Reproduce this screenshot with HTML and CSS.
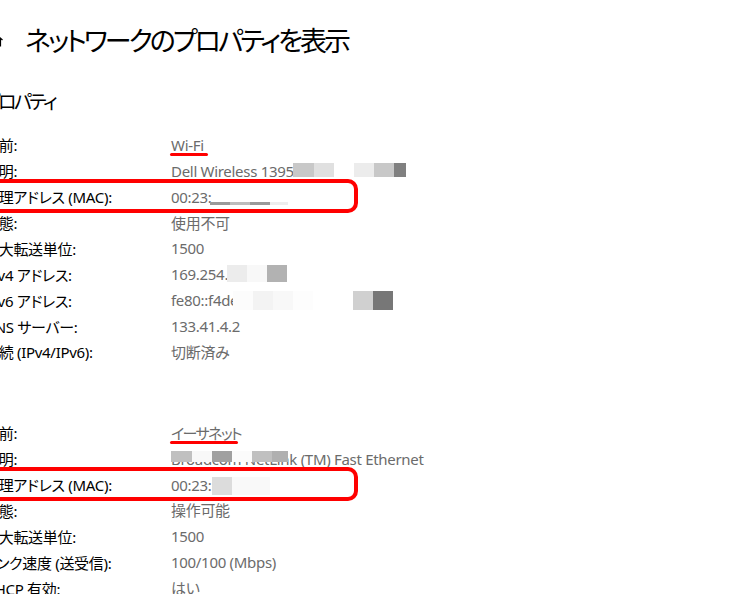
FILE: index.html
```html
<!DOCTYPE html>
<html lang="ja">
<head>
<meta charset="utf-8">
<link rel="stylesheet" href="styles.css">
</head>
<body>
<div class="page">
  <header class="titlebar">
    <svg class="home" viewBox="0 0 16 16" width="16" height="16"><path d="M1.5 8 L8 2 L14.5 8 M3.5 6.5 V14 H12.5 V6.5" fill="none" stroke="#000" stroke-width="1.2"/></svg>
    <h1 class="title">ネットワークのプロパティを表示</h1>
  </header>
  <h2 class="subtitle">プロパティ</h2>

  <section class="group">
    <div class="row"><span class="label">名前:</span><span class="value">Wi-Fi<i class="uline uline-wifi"></i></span></div>
    <div class="row"><span class="label">説明:</span><span class="value">Dell Wireless 1395<i class="blk" style="left:122px;width:21px;top:2px;height:14px;background:#c8c8c8"></i><i class="blk" style="left:143px;width:20px;top:2px;height:14px;background:#e0e0e0"></i><i class="blk" style="left:183px;width:20px;top:2px;height:14px;background:#ececec"></i><i class="blk" style="left:203px;width:20px;top:2px;height:14px;background:#c8c8c8"></i><i class="blk" style="left:223px;width:12px;top:2px;height:14px;background:#808080"></i></span></div>
    <div class="row"><span class="label">物理アドレス (MAC):</span><span class="value">00:23:<i class="blk" style="left:39px;width:20px;top:15px;height:3px;background:#9a9a9a"></i><i class="blk" style="left:59px;width:20px;top:15px;height:3px;background:#bdbdbd"></i><i class="blk" style="left:79px;width:20px;top:15px;height:3px;background:#9a9a9a"></i><i class="blk" style="left:99px;width:18px;top:15px;height:3px;background:#ededed"></i></span><i class="redbox"></i></div>
    <div class="row"><span class="label">状態:</span><span class="value">使用不可</span></div>
    <div class="row"><span class="label">最大転送単位:</span><span class="value">1500</span></div>
    <div class="row"><span class="label">IPv4 アドレス:</span><span class="value">169.254.<i class="blk" style="left:56px;width:20px;top:1px;height:17px;background:#ececec"></i><i class="blk" style="left:76px;width:20px;top:1px;height:17px;background:#f8f8f8"></i><i class="blk" style="left:96px;width:20px;top:1px;height:17px;background:#b2b2b2"></i></span></div>
    <div class="row"><span class="label">IPv6 アドレス:</span><span class="value">fe80::f4de<i class="blk" style="left:62px;width:20px;top:1px;height:19px;background:#fcfcfc"></i><i class="blk" style="left:82px;width:20px;top:1px;height:19px;background:#f3f3f3"></i><i class="blk" style="left:102px;width:20px;top:1px;height:19px;background:#f8f8f8"></i><i class="blk" style="left:122px;width:20px;top:1px;height:19px;background:#fdfdfd"></i><i class="blk" style="left:182px;width:20px;top:1px;height:19px;background:#d0d0d0"></i><i class="blk" style="left:202px;width:20px;top:1px;height:19px;background:#777"></i></span></div>
    <div class="row"><span class="label">DNS サーバー:</span><span class="value">133.41.4.2</span></div>
    <div class="row"><span class="label">接続 (IPv4/IPv6):</span><span class="value">切断済み</span></div>
  </section>

  <section class="group group2">
    <div class="row"><span class="label">名前:</span><span class="value"><span class="tight">イーサネット</span><i class="uline uline-eth"></i></span></div>
    <div class="row"><span class="label">説明:</span><span class="value">Broadcom NetLink (TM) Fast Ethernet<i class="blk" style="left:0;width:21px;top:2px;height:11px;background:#c0c0c0"></i><i class="blk" style="left:21px;width:20px;top:2px;height:11px;background:#f8f8f8"></i><i class="blk" style="left:41px;width:20px;top:2px;height:11px;background:#a0a0a0"></i><i class="blk" style="left:61px;width:20px;top:2px;height:11px;background:#fbfbfb"></i><i class="blk" style="left:81px;width:20px;top:2px;height:11px;background:#c0c0c0"></i><i class="blk" style="left:101px;width:16px;top:2px;height:11px;background:#b0b0b0"></i></span></div>
    <div class="row"><span class="label">物理アドレス (MAC):</span><span class="value">00:23:<i class="blk" style="left:41px;width:20px;top:2px;height:18px;background:#dcdcdc"></i><i class="blk" style="left:61px;width:38px;top:2px;height:18px;background:#f9f9f9"></i></span><i class="redbox"></i></div>
    <div class="row"><span class="label">状態:</span><span class="value">操作可能</span></div>
    <div class="row"><span class="label">最大転送単位:</span><span class="value">1500</span></div>
    <div class="row"><span class="label">リンク速度 (送受信):</span><span class="value">100/100 (Mbps)</span></div>
    <div class="row"><span class="label">DHCP 有効:</span><span class="value">はい</span></div>
  </section>
</div>
</body>
</html>
```

FILE: styles.css
```css
html, body {
  margin: 0;
  padding: 0;
  background: #fff;
  overflow: hidden;
}
body {
  width: 745px;
  height: 594px;
  font-family: "Noto Sans", "Noto Sans CJK JP", sans-serif;
  font-feature-settings: "palt";
  color: #000;
}
.page {
  margin-left: -16px;
  width: 761px;
}
.titlebar {
  height: 80px;
  display: flex;
  align-items: center;
}
.home {
  margin-left: 4px;
  flex: none;
}
.title {
  margin: 0 0 0 21px;
  font-size: 27px;
  letter-spacing: -3px;
  font-weight: 400;
  line-height: 1;
  white-space: nowrap;
}
.subtitle {
  margin: 0 0 0 -1px;
  height: 42px;
  display: flex;
  align-items: center;
  font-size: 19px;
  letter-spacing: -2.5px;
  font-weight: 400;
}
.group {
  margin-top: 10px;
}
.group2 {
  margin-top: 55px;
}
.row {
  height: 25.875px;
  display: flex;
  align-items: center;
  font-size: 15px;
  letter-spacing: -0.3px;
  position: relative;
}
.label {
  width: 187px;
  flex: none;
  white-space: nowrap;
}
.value {
  display: inline-block;
  line-height: 20px;
  height: 20px;
  color: #6b6b6b;
  position: relative;
  white-space: nowrap;
}
.tight {
  letter-spacing: -1.6px;
}
.blk {
  position: absolute;
  display: block;
}
.uline {
  position: absolute;
  display: block;
  height: 3px;
  background: #f00;
  border-radius: 2px;
  left: -1px;
  top: 18px;
}
.uline-wifi { width: 38px; }
.uline-eth { width: 68px; }
.redbox {
  position: absolute;
  display: block;
  left: -40px;
  width: 406px;
  top: -5px;
  height: 26px;
  border: 4px solid #f00;
  border-radius: 10px;
}
```
